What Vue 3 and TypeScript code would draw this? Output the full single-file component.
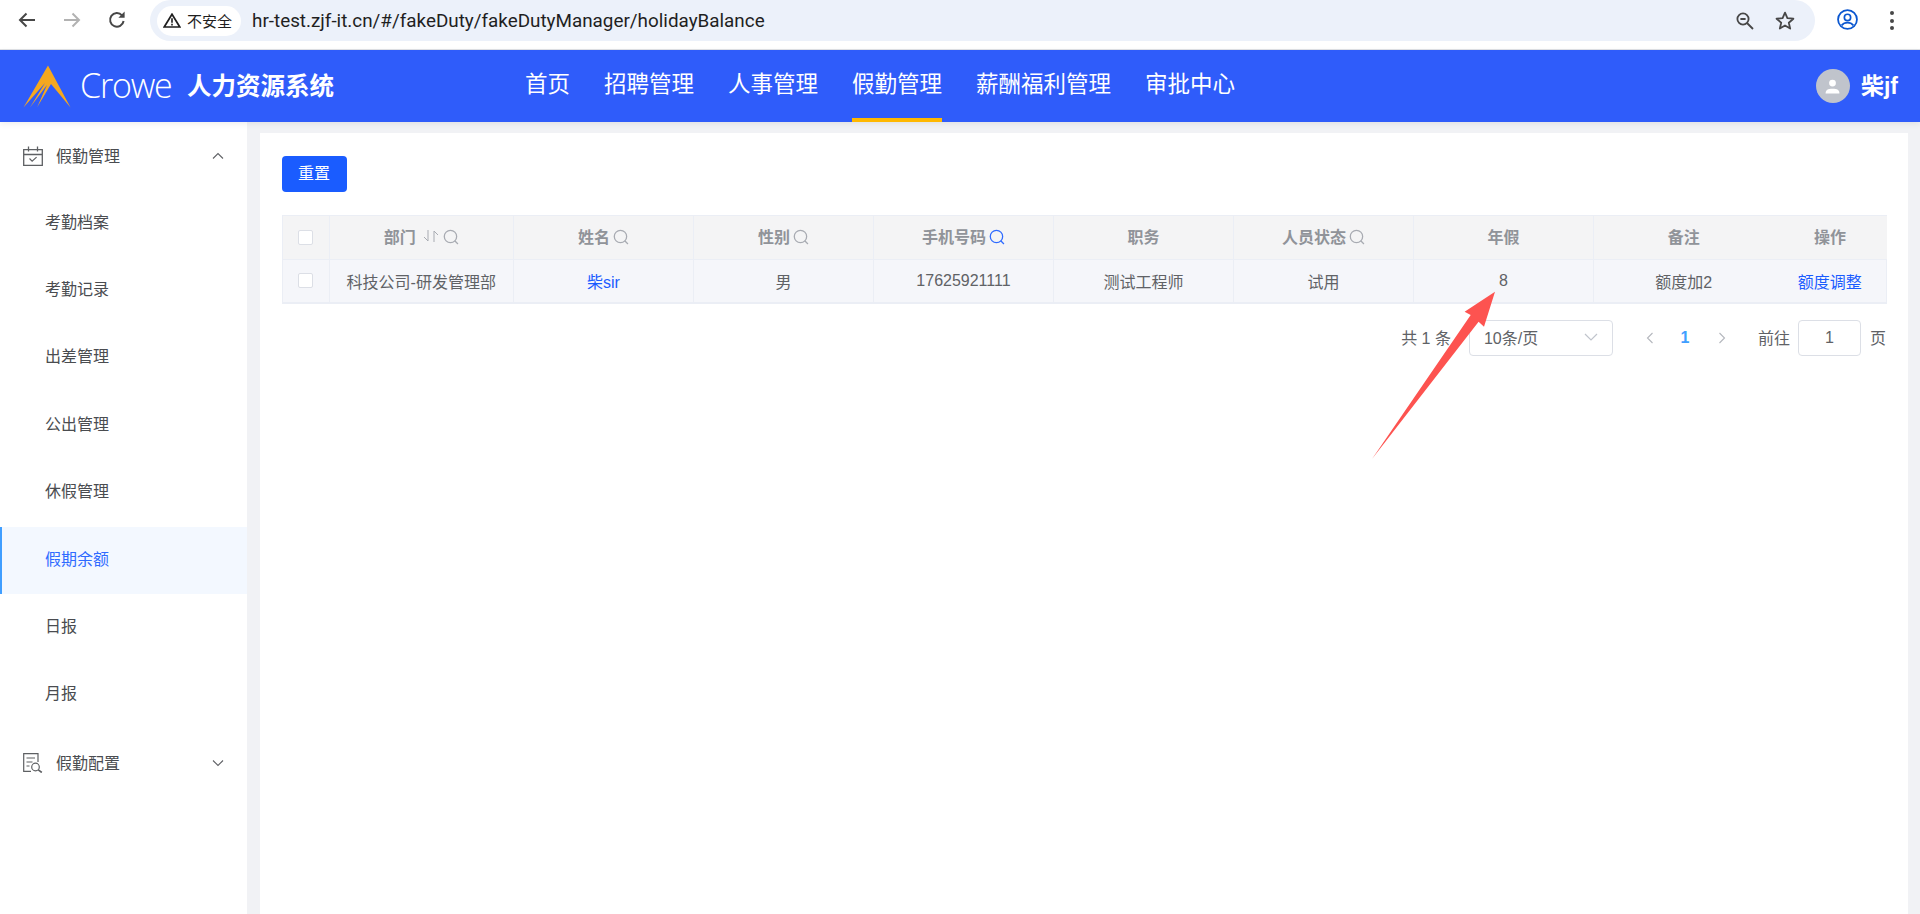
<script setup lang="ts">
interface Column { label: string; search?: boolean; active?: boolean; sort?: boolean }
const navItems = ['首页', '招聘管理', '人事管理', '假勤管理', '薪酬福利管理', '审批中心']
const subItems = ['考勤档案', '考勤记录', '出差管理', '公出管理', '休假管理', '假期余额', '日报', '月报']
const columns: Column[] = [
  { label: '部门', search: true, sort: true },
  { label: '姓名', search: true },
  { label: '性别', search: true },
  { label: '手机号码', search: true, active: true },
  { label: '职务' },
  { label: '人员状态', search: true },
  { label: '年假' },
  { label: '备注' },
  { label: '操作' }
]
</script>

<template>
  <div class="page">
    <div class="toolbar">
      <div class="nav-btns">
        <svg class="tb-icon" viewBox="0 0 24 24"><path d="M20 12H5.5M11.5 5.5 5 12l6.5 6.5" fill="none" stroke="#474747" stroke-width="2"/></svg>
        <svg class="tb-icon" viewBox="0 0 24 24"><path d="M4 12h14.5M12.5 5.5 19 12l-6.5 6.5" fill="none" stroke="#b2b2b2" stroke-width="2"/></svg>
        <svg class="tb-icon" viewBox="0 0 24 24"><path d="M18.6 13a6.8 6.8 0 1 1-1.6-5.6" fill="none" stroke="#474747" stroke-width="2"/><path d="M19.6 3.6v6.2h-6.2z" fill="#474747"/></svg>
      </div>
      <div class="omnibox">
        <div class="chip">
          <svg class="warn" viewBox="0 0 18 15"><path d="M9 1.2 1.2 14h15.6z" fill="none" stroke="#1f1f1f" stroke-width="1.7"/><path d="M8.2 5.2h1.6v4.6H8.2zM8.2 10.8h1.6v1.6H8.2z" fill="#1f1f1f"/></svg>
          <span>不安全</span>
        </div>
        <span class="url">hr-test.zjf-it.cn/#/fakeDuty/fakeDutyManager/holidayBalance</span>
        <svg class="zoom-ic" viewBox="0 0 18 18"><circle cx="7" cy="7" r="5.6" fill="none" stroke="#474747" stroke-width="1.8"/><path d="M4.4 7h5.2M11 11l6 6" fill="none" stroke="#474747" stroke-width="1.8"/></svg>
        <svg class="star-ic" viewBox="0 0 20 19"><path d="m10 1.6 2.4 5.6 6 .5-4.6 4 1.4 5.9L10 14.5l-5.2 3.1 1.4-5.9-4.6-4 6-.5z" fill="none" stroke="#474747" stroke-width="1.8" stroke-linejoin="round"/></svg>
      </div>
      <svg class="profile" viewBox="0 0 20 20"><circle cx="10" cy="10" r="9" fill="none" stroke="#0b57d0" stroke-width="1.7"/><circle cx="10" cy="8" r="3" fill="none" stroke="#0b57d0" stroke-width="1.6"/><path d="M4.4 15.6c1.6-2 3.4-2.6 5.6-2.6s4 .6 5.6 2.6" fill="none" stroke="#0b57d0" stroke-width="1.6"/></svg>
      <div class="dots"><i></i><i></i><i></i></div>
    </div>

    <header class="header">
      <svg class="logo" viewBox="0 0 48 43"><path d="M25 .5 47.500 42.500 28 19 14 42.500 24 20 7 42.500 22 18 .5 42.500z" fill="#f5a81f"/></svg>
      <span class="crowe">Crowe</span>
      <span class="system">人力资源系统</span>
      <nav class="top-nav">
        <a v-for="item in navItems" :key="item" class="top-link" :class="{ on: item === '假勤管理' }">{{ item }}</a>
      </nav>
      <div class="user">
        <span class="avatar">
          <svg viewBox="0 0 16 16"><circle cx="8" cy="4.800" r="3.200" fill="#fff"/><path d="M1.500 14.500c0-3 2-4.300 6.500-4.300s6.500 1.300 6.500 4.300z" fill="#fff"/></svg>
        </span>
        <span class="user-name">柴jf</span>
      </div>
    </header>

    <div class="body">
      <aside class="side">
        <div class="group first">
          <svg class="g-icon" viewBox="0 0 20 20"><path d="M.7 3.700h18.600v15.600H.7zM.7 8.500h18.600M5.500.5v5M14.500.5v5" fill="none" stroke="#5e6063" stroke-width="1.300"/><path d="m6.500 12.500 2.600 2.600 4.500-4" fill="none" stroke="#5e6063" stroke-width="1.200"/></svg>
          <span class="g-label">假勤管理</span>
          <svg class="chev" viewBox="0 0 12 8"><path d="m1 6.500 5-5 5 5" fill="none" stroke="#606266" stroke-width="1.100"/></svg>
        </div>
        <div v-for="s in subItems" :key="s" class="sub" :class="{ current: s === '假期余额' }">{{ s }}</div>
        <div class="group">
          <svg class="g-icon" viewBox="0 0 20 20"><path d="M15 9V.7H.7v17.600H8M3.500 5h8.500M3.500 9h6M3.500 13h3" fill="none" stroke="#5e6063" stroke-width="1.200"/><circle cx="12.500" cy="14" r="3.800" fill="none" stroke="#5e6063" stroke-width="1.200"/><path d="m15.300 16.800 3.500 2.700" fill="none" stroke="#5e6063" stroke-width="1.700"/></svg>
          <span class="g-label">假勤配置</span>
          <svg class="chev" viewBox="0 0 12 8"><path d="m1 1.500 5 5 5-5" fill="none" stroke="#606266" stroke-width="1.100"/></svg>
        </div>
      </aside>

      <main class="content">
        <button class="reset" type="button">重置</button>
        <table class="grid">
          <colgroup>
            <col class="c-check" /><col class="c-dept" />
            <col v-for="n in 7" :key="n" class="c-std" />
            <col class="c-op" />
          </colgroup>
          <thead>
            <tr>
              <th><span class="check"></span></th>
              <th v-for="c in columns" :key="c.label" :class="{ plain: c.label === '操作' || c.label === '备注' }">
                <span class="th-inner">
                  {{ c.label }}
                  <svg v-if="c.sort" class="sort" viewBox="0 0 18 14"><path d="M6 1v11L2 8M12 13V2l4 4" fill="none" stroke="#a8abb2" stroke-width="1"/></svg>
                  <svg v-if="c.search" class="search" :class="{ hot: c.active }" viewBox="0 0 15 15"><circle cx="7" cy="7" r="5.800" fill="none" stroke="currentColor" stroke-width="1.200"/><path d="m11 11 3 3" fill="none" stroke="currentColor" stroke-width="1.200"/></svg>
                </span>
              </th>
            </tr>
          </thead>
          <tbody>
            <tr>
              <td><span class="check"></span></td>
              <td>科技公司-研发管理部</td>
              <td><a class="link">柴sir</a></td>
              <td>男</td>
              <td>17625921111</td>
              <td>测试工程师</td>
              <td>试用</td>
              <td>8</td>
              <td class="plain">额度加2</td>
              <td><a class="link">额度调整</a></td>
            </tr>
          </tbody>
        </table>

        <div class="pager">
          <span class="total">共 1 条</span>
          <div class="select">
            <span>10条/页</span>
            <svg class="sel-chev" viewBox="0 0 14 8"><path d="m1 1 6 6 6-6" fill="none" stroke="#c0c4cc" stroke-width="1.200"/></svg>
          </div>
          <svg class="pg-arrow prev" viewBox="0 0 8 12"><path d="M6.500 1 1.500 6l5 5" fill="none" stroke="#b4b7bd" stroke-width="1.100"/></svg>
          <span class="pg-num">1</span>
          <svg class="pg-arrow next" viewBox="0 0 8 12"><path d="m1.500 1 5 5-5 5" fill="none" stroke="#b4b7bd" stroke-width="1.100"/></svg>
          <span class="goto">前往</span>
          <div class="jump">1</div>
          <span class="unit">页</span>
        </div>
      </main>
    </div>

    <svg class="mark" viewBox="0 0 1920 914"><polygon points="1372,459 1470.700,315 1464.600,311.700 1495,291.700 1484,326.700 1478.600,321.700" fill="#fd5350"/></svg>
  </div>
</template>

<style>
html, body { margin: 0; padding: 0; background: #fff; }
</style>

<style scoped>
.page {
  position: relative;
  width: 1920px;
  height: 914px;
  overflow: hidden;
  display: flex;
  flex-direction: column;
  font-family: "Liberation Sans", "Noto Sans CJK SC", sans-serif;
  font-size: 16px;
  color: #606266;
}
.toolbar {
  height: 49px;
  flex: none;
  display: flex;
  align-items: flex-start;
  border-bottom: 1px solid #dfe1e5;
  background: #fff;
}
.nav-btns { display: flex; gap: 21px; padding: 8px 0 0 15px; width: 150px; flex: none; box-sizing: border-box; }
.tb-icon { width: 24px; height: 24px; flex: none; }
.omnibox {
  width: 1665px;
  height: 41px;
  flex: none;
  display: flex;
  align-items: center;
  background: #ecf1fa;
  border-radius: 21px;
  box-sizing: border-box;
  padding-left: 7px;
}
.chip {
  width: 84px;
  height: 30px;
  flex: none;
  box-sizing: border-box;
  background: #fff;
  border-radius: 15px;
  display: flex;
  align-items: center;
  gap: 6px;
  padding-left: 6px;
  font-size: 15px;
  color: #1f1f1f;
}
.warn { width: 18px; height: 15px; flex: none; }
.url {
  margin-left: 11px;
  font-family: Roboto, sans-serif;
  font-size: 18.850px;
  color: #1f1f1f;
  flex: 1;
  white-space: nowrap;
}
.zoom-ic { width: 18px; height: 18px; flex: none; margin-right: 21px; }
.star-ic { width: 20px; height: 19px; flex: none; margin-right: 20px; }
.profile { width: 21px; height: 21px; flex: none; margin: 9px 0 0 22px; }
.dots { display: flex; flex-direction: column; gap: 3.500px; margin: 11px 0 0 32px; }
.dots i { width: 4px; height: 4px; border-radius: 50%; background: #474747; display: block; }

.header {
  position: relative;
  z-index: 2;
  height: 72px;
  flex: none;
  display: flex;
  align-items: center;
  background: #2f5cfa;
  box-shadow: 0 2px 6px rgba(0, 0, 0, .07);
  color: #fff;
}
.logo { width: 48px; height: 43px; margin: 0 0 0 23px; flex: none; }
.crowe {
  font-family: "Open Sans", sans-serif;
  font-weight: 300;
  font-size: 34px;
  letter-spacing: -1.200px;
  margin-left: 9px;
  padding-bottom: 2px;
  width: 107px;
  flex: none;
}
.system { font-family: "Noto Sans CJK SC", sans-serif; font-weight: 700; font-size: 24.500px; width: 338px; flex: none; padding-bottom: 4px; }
.top-nav { display: flex; gap: 34px; height: 100%; flex: 1; }
.top-link {
  font-family: "Noto Sans CJK SC", sans-serif;
  font-size: 22.500px;
  line-height: 64px;
  height: 72px;
  box-sizing: border-box;
  color: #fff;
  white-space: nowrap;
}
.top-link.on { border-bottom: 4px solid #ffb800; }
.user { display: flex; align-items: center; gap: 11px; padding-right: 22px; }
.avatar {
  width: 34px;
  height: 34px;
  border-radius: 50%;
  background: #c0c4cc;
  display: flex;
  align-items: center;
  justify-content: center;
}
.avatar svg { width: 17px; height: 17px; }
.user-name { font-weight: 700; font-size: 23px; padding-bottom: 5px; }

.body { flex: 1; min-height: 0; display: flex; background: #f1f2f5; }
.side { width: 247px; flex: none; background: #fff; display: flex; flex-direction: column; }
.group { height: 67.400px; flex: none; display: flex; align-items: center; padding-left: 23px; padding-right: 23px; color: #4a4c50; }
.group.first { height: 67.700px; }
.g-icon { width: 20px; height: 20px; flex: none; }
.g-label { margin-left: 13px; flex: 1; padding-bottom: 2px; }
.chev { width: 12px; height: 8px; flex: none; }
.sub { height: 67.400px; line-height: 66px; flex: none; padding-left: 45px; color: #4a4c50; }
.sub.current { background: #f3f8ff; color: #2f6bff; box-shadow: inset 2px 0 0 #409eff; }

.content {
  width: 1648px;
  margin: 11px 0 0 13px;
  background: #fff;
  box-sizing: border-box;
  padding: 23px 22px 0 21.500px;
}
.reset {
  display: block;
  width: 65px;
  height: 36px;
  border: none;
  border-radius: 4px;
  background: #1a5cff;
  color: #fff;
  font: inherit;
  padding: 0 0 4px;
}
.grid {
  width: 1604.500px;
  margin-top: 23px;
  table-layout: fixed;
  border-collapse: collapse;
  border-top: 1px solid #ebeef5;
  border-bottom: 2px solid #ebeef5;
}
.c-check { width: 47px; }
.c-dept { width: 184.500px; }
.c-std { width: 180px; }
.c-op { width: 113px; }
th, td { padding: 0; box-sizing: border-box; text-align: center; border-left: 1px solid #ebeef5; border-right: 1px solid #ebeef5; }
th { padding-bottom: 3px; }
th:first-child { padding-bottom: 0; }
th.plain, td.plain { border-right: none; }
th.plain + th, td.plain + td { border-left: none; }
th { height: 44px; background: #f4f4f5; color: #909399; font-weight: 700; border-bottom: 1px solid #ebeef5; }
td { height: 43px; background: #f5f6fa; color: #606266; }
.th-inner { display: inline-flex; align-items: center; gap: 3px; }
.check {
  display: block;
  width: 15px;
  height: 15px;
  margin: 0 auto;
  box-sizing: border-box;
  background: #fff;
  border: 1px solid #dcdfe6;
  border-radius: 2px;
}
.sort { width: 18px; height: 14px; margin-left: 3px; }
.search { width: 16px; height: 16px; color: #a8abb2; margin-top: 2px; }
.search.hot { color: #2f6bff; }
.link { color: #1a5cff; }

.pager { display: flex; align-items: center; margin-top: 16px; height: 36px; justify-content: flex-end; color: #606266; }
.total { margin-right: 18px; padding-bottom: 2px; }
.select {
  width: 144px;
  height: 36px;
  box-sizing: border-box;
  border: 1px solid #dcdfe6;
  border-radius: 4px;
  display: flex;
  align-items: center;
  justify-content: space-between;
  padding: 0 14px 2px;
}
.sel-chev { width: 14px; height: 8px; }
.pg-arrow { width: 8px; height: 12px; flex: none; }
.prev { margin-left: 33px; }
.pg-num { color: #409eff; font-weight: 700; width: 10px; text-align: center; margin: 0 28px 0 26px; }
.goto { margin-left: 32px; padding-bottom: 2px; }
.jump {
  width: 63px;
  height: 36px;
  box-sizing: border-box;
  border: 1px solid #dcdfe6;
  border-radius: 4px;
  margin: 0 9px 0 8px;
  text-align: center;
  line-height: 33px;
}
.unit { padding-bottom: 2px; }
.mark { position: absolute; left: 0; top: 0; width: 1920px; height: 914px; pointer-events: none; z-index: 5; }
</style>
